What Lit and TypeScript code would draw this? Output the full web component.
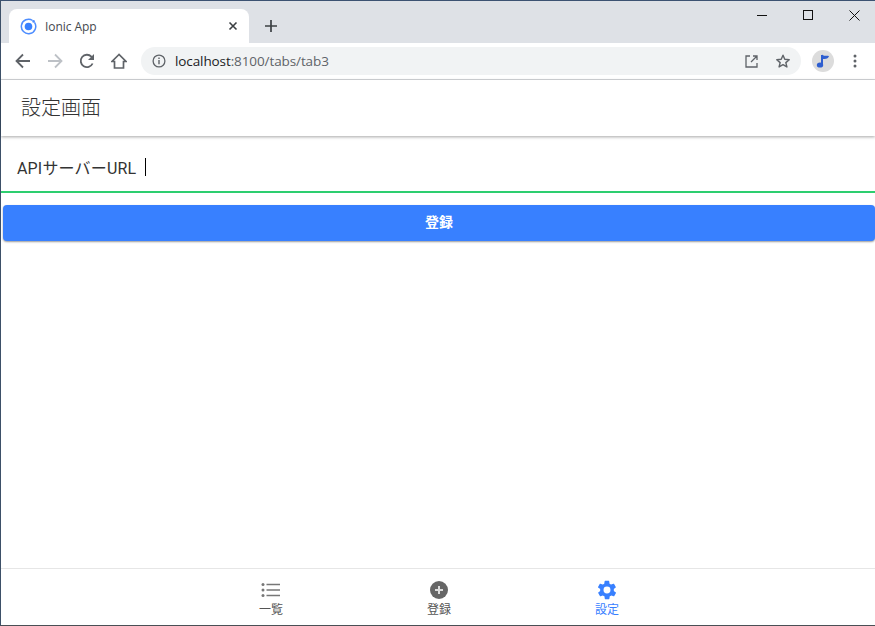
import { LitElement, html, css } from "lit";
import { customElement } from "lit/decorators.js";

@customElement("app-root")
export class AppRoot extends LitElement {
  static styles = css`
    :host { display: block; width: 875px; height: 626px; overflow: hidden; font-family: "Roboto", "Noto Sans CJK JP", sans-serif; }
    * { box-sizing: border-box; }
    .window { width: 875px; height: 626px; display: flex; flex-direction: column; border: 1px solid #3d5068; border-top-color: #3c5272; border-right: none; border-bottom-color: #4a4f55; background: #fff; }
    .titlebar { height: 42px; flex: none; background: #dee1e6; display: flex; align-items: flex-end; padding-left: 8px; }
    .tab { width: 240px; height: 34px; background: #fff; border-radius: 8px 8px 0 0; display: flex; align-items: center; padding: 0 11px 0 11px; }
    .tab-title { font: 12px "Open Sans", "Noto Sans", sans-serif; color: #45494e; margin-left: 8px; flex: 1; letter-spacing: -0.05px; }
    .tab svg { display: block; }
    .newtab { width: 44px; height: 34px; display: flex; align-items: center; justify-content: center; }
    .spacer { flex: 1; }
    .wincontrols { align-self: flex-start; display: flex; height: 30px; margin-right: -2px; }
    .wc { width: 46px; height: 28px; display: flex; align-items: center; justify-content: center; }
    .toolbar { height: 37px; flex: none; background: #fff; display: flex; align-items: center; padding-left: 6px; border-bottom: 1px solid #d5d7da; }
    .nb { width: 32px; height: 32px; display: flex; align-items: center; justify-content: center; flex: none; }
    .omni { width: 660px; height: 28px; margin-left: 6px; background: #f1f3f4; border-radius: 14px; display: flex; align-items: center; padding-left: 11px; padding-right: 9px; flex: none; }
    .url { font: 13.5px "Open Sans", "Noto Sans", sans-serif; color: #202124; margin-left: 9px; flex: 1; letter-spacing: -0.1px; }
    .url span { color: #5f6368; }
    .omni svg { display: block; flex: none; }
    .omni .open { margin-right: 3px; }
    .omni .star { margin-left: 14px; margin-right: 1px; }
    .avatar { width: 22px; height: 22px; border-radius: 50%; background: #dcdcdc; margin-left: 11px; display: flex; align-items: center; justify-content: center; flex: none; }
    .dots { margin-left: 9px; width: 24px; display: flex; justify-content: center; }
    .app { flex: 1; display: flex; flex-direction: column; min-height: 0; }
    .header { height: 56px; flex: none; display: flex; align-items: center; padding: 0 0 3px 20px; background: #fff; box-shadow: 0 1px 3px rgba(0,0,0,.35); position: relative; z-index: 1; }
    .header h1 { margin: 0; font: 300 20px "Noto Sans CJK JP", sans-serif; color: #333; }
    .content { flex: 1; min-height: 0; }
    .item { height: 57px; display: flex; align-items: center; padding: 7px 0 0 16px; border-bottom: 2px solid #2dce6f; color: #333; }
    .item .label { font: 400 16px "Roboto", "Noto Sans CJK JP", sans-serif; letter-spacing: 0.17px; }
    .caret { width: 1px; height: 18px; background: #000; margin-left: 9px; }
    .btn { display: flex; margin: 12px 0 0 2px; width: 872px; height: 36px; padding-bottom: 5px; border-radius: 4px; background: #3880ff; color: #fff; align-items: center; justify-content: center; font: 700 14px "Roboto", "Noto Sans CJK JP", sans-serif; box-shadow: 0 1px 2px rgba(0,0,0,.4); }
    .tabbar { height: 57px; flex: none; border-top: 1px solid #e6e6e6; display: flex; justify-content: center; padding-left: 2px; background: #fff; }
    .tb { width: 168px; display: flex; flex-direction: column; align-items: center; padding-top: 10px; color: #555; font: 400 12px "Noto Sans CJK JP", sans-serif; }
    .tb svg { display: block; margin-bottom: 1px; }
    .tb.on { color: #3880ff; }
    .tb span { line-height: 14px; }
  `;

  render() {
    return html`
      <div class="window">
        <div class="titlebar">
          <div class="tab">
            <svg width="17" height="17" viewBox="0 0 17 17"><path d="M12.600 2.500A7.200 7.200 0 1 0 14.500 4.400" fill="none" stroke="#4d8dff" stroke-width="1.500"/><circle cx="8.500" cy="8.500" r="3.800" fill="#3880ff"/><circle cx="13.600" cy="3.400" r="1.300" fill="#4d8dff"/></svg>
            <span class="tab-title">Ionic App</span>
            <svg width="10" height="10" viewBox="0 0 10 10"><path d="M1.500 1.500l7 7M8.500 1.500l-7 7" stroke="#3c4043" stroke-width="1.600" fill="none"/></svg>
          </div>
          <div class="newtab">
            <svg width="12" height="12" viewBox="0 0 12 12"><path d="M6 0v12M0 6h12" stroke="#3c4043" stroke-width="1.700" fill="none"/></svg>
          </div>
          <div class="spacer"></div>
          <div class="wincontrols">
            <div class="wc"><svg width="10" height="10" viewBox="0 0 10 10"><path d="M0 5.500h10" stroke="#111" stroke-width="1"/></svg></div>
            <div class="wc"><svg width="10" height="10" viewBox="0 0 10 10"><rect x=".5" y=".5" width="9" height="9" fill="none" stroke="#111"/></svg></div>
            <div class="wc"><svg width="11" height="11" viewBox="0 0 11 11"><path d="M.5.5l10 10M10.500.5l-10 10" stroke="#111" stroke-width="1" fill="none"/></svg></div>
          </div>
        </div>
        <div class="toolbar">
          <div class="nb"><svg width="16" height="16" viewBox="0 0 16 16"><path d="M15 8H2M8 1.500L1.500 8 8 14.500" stroke="#5f6368" stroke-width="1.800" fill="none"/></svg></div>
          <div class="nb"><svg width="16" height="16" viewBox="0 0 16 16"><path d="M1 8h13M8 1.500L14.500 8 8 14.500" stroke="#bdc1c6" stroke-width="1.800" fill="none"/></svg></div>
          <div class="nb"><svg width="16" height="16" viewBox="0 0 16 16"><path d="M13.600 10.500A6.200 6.200 0 1 1 12.400 3.600L14 5.200" stroke="#5f6368" stroke-width="1.800" fill="none"/><path d="M15 1v6H9z" fill="#5f6368"/></svg></div>
          <div class="nb"><svg width="16" height="16" viewBox="0 0 16 16"><path d="M8 1.500L1 8.500h2.500V15h9V8.500H15z" stroke="#5f6368" stroke-width="1.700" fill="none"/></svg></div>
          <div class="omni">
            <svg width="14" height="14" viewBox="0 0 14 14"><circle cx="7" cy="7" r="5.900" fill="none" stroke="#5f6368" stroke-width="1.300"/><path d="M7 6v4.200M7 3.600v1.400" stroke="#5f6368" stroke-width="1.400"/></svg>
            <div class="url">localhost<span>:8100/tabs/tab3</span></div>
            <svg class="open" width="13" height="13" viewBox="0 0 13 13"><path d="M5 1H1v11h11V8M8 1h4v4M12 1L6 7" stroke="#5f6368" stroke-width="1.300" fill="none"/></svg>
            <svg class="star" width="16" height="16" viewBox="0 0 18 18"><path d="M9 2.500l2 4.600 5 .4-3.800 3.300 1.200 4.900L9 13.100l-4.400 2.600 1.200-4.900L2 7.500l5-.4z" stroke="#5f6368" stroke-width="1.600" fill="none" stroke-linejoin="round"/></svg>
          </div>
          <div class="avatar"><svg width="14" height="16" viewBox="0 0 14 16"><path d="M6 2v9.500" stroke="#2f5fd0" stroke-width="2"/><path d="M6 1.500c2 2 4.500 1 7 1.500-.500 2-2.500 3.500-6 3z" fill="#2f5fd0"/><ellipse cx="4" cy="12" rx="3.200" ry="2.600" fill="#2f5fd0"/></svg></div>
          <div class="dots"><svg width="4" height="14" viewBox="0 0 4 14"><circle cx="2" cy="2" r="1.500" fill="#5f6368"/><circle cx="2" cy="7" r="1.500" fill="#5f6368"/><circle cx="2" cy="12" r="1.500" fill="#5f6368"/></svg></div>
        </div>
        <div class="app">
          <div class="header"><h1>設定画面</h1></div>
          <div class="content">
            <div class="item"><span class="label">APIサーバーURL</span><span class="caret"></span></div>
            <div class="btn">登録</div>
          </div>
          <div class="tabbar">
            <div class="tb">
              <svg width="22" height="22" viewBox="0 0 22 22"><path d="M6.500 5.500H20M6.500 11H20M6.500 16.500H20" stroke="#777" stroke-width="1.500"/><circle cx="3" cy="5.500" r="1.500" fill="#777"/><circle cx="3" cy="11" r="1.500" fill="#777"/><circle cx="3" cy="16.500" r="1.500" fill="#777"/></svg>
              <span>一覧</span>
            </div>
            <div class="tb">
              <svg width="22" height="22" viewBox="0 0 22 22"><circle cx="11" cy="11" r="9" fill="#666"/><path d="M11 7v8M7 11h8" stroke="#ddd" stroke-width="2"/></svg>
              <span>登録</span>
            </div>
            <div class="tb on">
              <svg width="22" height="22" viewBox="0 0 24 24"><path fill="#3880ff" d="M19.400 13c.1-.3.100-.7.100-1s0-.7-.1-1l2.100-1.600c.2-.2.300-.4.100-.7l-2-3.400c-.1-.2-.4-.3-.6-.2l-2.500 1c-.5-.4-1.100-.7-1.700-1l-.4-2.600c0-.3-.2-.5-.5-.5h-4c-.3 0-.5.200-.5.500l-.4 2.600c-.6.300-1.200.6-1.700 1l-2.500-1c-.2-.1-.5 0-.6.200l-2 3.400c-.1.300-.1.500.1.700L4.600 11c-.1.300-.1.700-.1 1s0 .7.100 1l-2.100 1.600c-.2.200-.3.400-.1.700l2 3.400c.1.200.4.300.6.200l2.500-1c.5.400 1.100.7 1.700 1l.4 2.600c0 .3.200.5.500.5h4c.3 0 .5-.2.500-.5l.4-2.600c.6-.3 1.200-.6 1.700-1l2.500 1c.2.100.5 0 .6-.2l2-3.400c.1-.3.100-.5-.1-.7zM12 15.800a3.800 3.800 0 1 1 0-7.600 3.800 3.800 0 0 1 0 7.600z"/></svg>
              <span>設定</span>
            </div>
          </div>
        </div>
      </div>
    `;
  }
}
